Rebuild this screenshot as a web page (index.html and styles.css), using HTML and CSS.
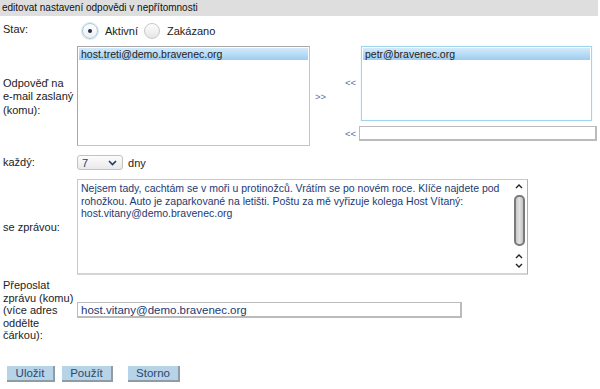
FILE: index.html
```html
<!DOCTYPE html>
<html lang="cs">
<head>
    <meta charset="UTF-8">
    <title>Odpověď v nepřítomnosti</title>
    <link rel="stylesheet" href="styles.css">
</head>
<body>
    <div class="page">
        <div class="title">editovat nastavení odpovědi v nepřítomnosti</div>

        <table class="form">
            <tr class="row-state">
                <td class="label">Stav:</td>
                <td>
                    <span class="radios">
                        <span class="radio checked"></span><span class="radio-text">Aktivní</span>
                        <span class="radio"></span><span class="radio-text">Zakázano</span>
                    </span>
                </td>
            </tr>
            <tr class="row-reply">
                <td class="label"><div class="label-clip">Odpověď na<br>e-mail zaslaný<br>(komu):</div></td>
                <td>
                    <div class="recipients">
                        <div class="listbox list-left">
                            <div class="option selected">host.treti@demo.bravenec.org</div>
                        </div>
                        <a href="#" class="arrow arrow-add">&gt;&gt;</a>
                        <a href="#" class="arrow arrow-remove">&lt;&lt;</a>
                        <div class="listbox list-right">
                            <div class="option selected">petr@bravenec.org</div>
                        </div>
                        <a href="#" class="arrow arrow-remove-input">&lt;&lt;</a>
                        <input type="text" class="field field-add">
                    </div>
                </td>
            </tr>
            <tr class="row-every">
                <td class="label">každý:</td>
                <td>
                    <span class="select">
                        <span class="select-value">7</span>
                        <svg class="chevron" width="9" height="6" viewBox="0 0 9 6">
                            <path d="M1 1 L4.5 4.5 L8 1" fill="none" stroke="#1d3a72" stroke-width="1.6"/>
                        </svg>
                    </span>
                    <span class="unit">dny</span>
                </td>
            </tr>
            <tr class="row-message">
                <td class="label">se zprávou:</td>
                <td>
                    <div class="textarea">
                        <div class="textarea-text">Nejsem tady, cachtám se v moři u protinožců. Vrátím se po novém roce. Klíče najdete pod rohožkou. Auto je zaparkované na letišti. Poštu za mě vyřizuje kolega Host Vítaný: host.vitany@demo.bravenec.org</div>
                        <div class="scrollbar">
                            <svg class="scroll-arrow" width="8" height="6" viewBox="0 0 8 6">
                                <path d="M1 5 L4 2 L7 5" fill="none" stroke="#222" stroke-width="1.4"/>
                            </svg>
                            <div class="thumb"></div>
                            <svg class="scroll-arrow" width="8" height="6" viewBox="0 0 8 6">
                                <path d="M1 5 L4 2 L7 5" fill="none" stroke="#222" stroke-width="1.4"/>
                            </svg>
                            <svg class="scroll-arrow" width="8" height="6" viewBox="0 0 8 6">
                                <path d="M1 1 L4 4 L7 1" fill="none" stroke="#222" stroke-width="1.4"/>
                            </svg>
                        </div>
                    </div>
                </td>
            </tr>
            <tr class="row-forward">
                <td class="label">Přeposlat zprávu (komu) (více adres oddělte čárkou):</td>
                <td>
                    <input type="text" class="field field-forward" value="host.vitany@demo.bravenec.org">
                </td>
            </tr>
        </table>

        <div class="buttons">
            <button class="btn btn-save">Uložit</button>
            <button class="btn btn-apply">Použít</button>
            <button class="btn btn-cancel">Storno</button>
        </div>
    </div>
</body>
</html>
```

FILE: styles.css
```css
body {
    margin: 0;
    font-family: "Liberation Sans", Arial, sans-serif;
    font-size: 11px;
    color: #222;
    background: #fff;
}
.page {
    width: 598px;
}
.title {
    background: #dedede;
    height: 16px;
    line-height: 16px;
    padding-left: 2px;
    font-size: 10px;
    color: #111;
}
.form {
    border-collapse: collapse;
    margin-top: 4px;
}
.form td {
    padding: 0;
    vertical-align: middle;
}
.form .label {
    width: 74px;
    padding-left: 3px;
    line-height: 13px;
}
.row-state td {
    height: 22px;
    vertical-align: top;
}
.row-state .label {
    line-height: 19px;
}
.radios {
    display: flex;
    align-items: center;
    padding: 3px 0 0 5px;
}
.radio {
    width: 14px;
    height: 14px;
    border: 1px solid #c8c8c8;
    border-radius: 50%;
    background: linear-gradient(#fdfdfd, #e6e6e6);
    position: relative;
}
.radio.checked {
    border-color: #a9c8e0;
    box-shadow: 0 0 0 1px #d7e8f5;
    background: linear-gradient(#ffffff, #eeeeee);
}
.radio.checked::after {
    content: "";
    position: absolute;
    left: 5px;
    top: 5px;
    width: 4px;
    height: 4px;
    border-radius: 50%;
    background: #1d2f55;
}
.radio-text {
    margin-left: 7px;
    margin-right: 6px;
}
.row-reply td {
    border-top: 4px solid #fff;
}
.label-clip {
    width: 72px;
    overflow: hidden;
    white-space: nowrap;
    line-height: 13.5px;
    padding-top: 2px;
}
.recipients {
    display: grid;
    grid-template-columns: 233px 35px 14px 238px;
    grid-template-rows: 75px 25px;
}
.listbox {
    box-sizing: border-box;
    background: #fff;
    padding: 1px;
}
.list-left {
    grid-row: 1 / 3;
    border: 1px solid #c4c4c4;
    border-top-color: #a8a8a8;
    border-left-color: #a8a8a8;
}
.list-right {
    margin-left: 2px;
    width: 231px;
    border: 1px solid #9fd6ee;
    box-shadow: 0 0 1px #bfe6f7;
}
.option {
    height: 12px;
    line-height: 12px;
    padding-left: 2px;
    font-size: 10.5px;
    color: #222;
}
.option.selected {
    background: linear-gradient(#d4eafa, #9dcdf0);
}
.arrow {
    font-size: 9.5px;
    color: #5a6fa8;
    text-decoration: none;
    align-self: center;
}
.arrow-add {
    grid-row: 1 / 3;
    padding-left: 5px;
}
.arrow-remove {
    margin-top: -2px;
}
.field {
    box-sizing: border-box;
    border: 1px solid #bbb;
    border-right-width: 2px;
    border-bottom-width: 2px;
    font-family: "Liberation Sans", Arial, sans-serif;
    padding: 0 3px;
    margin: 0;
    outline: none;
}
.field-add {
    align-self: center;
    width: 238px;
    height: 15px;
}
.row-every td {
    height: 33px;
}
.select {
    display: inline-flex;
    align-items: center;
    justify-content: space-between;
    box-sizing: border-box;
    width: 46px;
    height: 15px;
    padding: 0 5px 0 4px;
    border: 1px solid #c2c2c2;
    border-radius: 3px;
    background: linear-gradient(#fcfcfc, #e9e9e9);
    vertical-align: middle;
    color: #1d3a72;
}
.unit {
    margin-left: 2px;
    vertical-align: middle;
}
.textarea {
    display: flex;
    box-sizing: border-box;
    width: 451px;
    height: 96px;
    border: 1px solid #c8c8c8;
    border-right-color: #b0b0b0;
    border-bottom: 2px solid #d4d4d4;
}
.textarea-text {
    flex: 1;
    padding: 2px 3px;
    color: #1d3a72;
    font-size: 10.5px;
    line-height: 12.5px;
}
.scrollbar {
    width: 14px;
    margin-right: 1px;
    display: flex;
    flex-direction: column;
    align-items: center;
    padding-top: 1px;
}
.scroll-arrow {
    display: block;
    margin: 2px 0;
}
.thumb {
    box-sizing: border-box;
    width: 11px;
    height: 51px;
    margin: 4px 0 5px;
    border: 2px solid #7b7b7b;
    border-radius: 5px;
    background: linear-gradient(90deg, #c9c9c9, #e2e2e2 50%, #c4c4c4);
}
.row-forward td {
    border-top: 4px solid #fff;
}
.row-forward .label {
    line-height: 12.5px;
}
.field-forward {
    display: block;
    width: 385px;
    height: 16px;
    font-size: 11.5px;
    color: #1d3a72;
}
.buttons {
    display: flex;
    padding: 24px 0 0 7px;
}
.btn {
    box-sizing: border-box;
    font-family: "Liberation Sans", Arial, sans-serif;
    font-size: 11.5px;
    color: #2a4870;
    background: #b6d3e7;
    border: none;
    border-right: 2px solid #8f9ca6;
    border-bottom: 2px solid #8f9ca6;
    height: 16px;
    padding: 0;
    margin-right: 7px;
    line-height: 14px;
}
.btn-save {
    width: 48px;
}
.btn-apply {
    width: 51px;
}
.btn-cancel {
    width: 52px;
    margin-left: 8px;
}
```
